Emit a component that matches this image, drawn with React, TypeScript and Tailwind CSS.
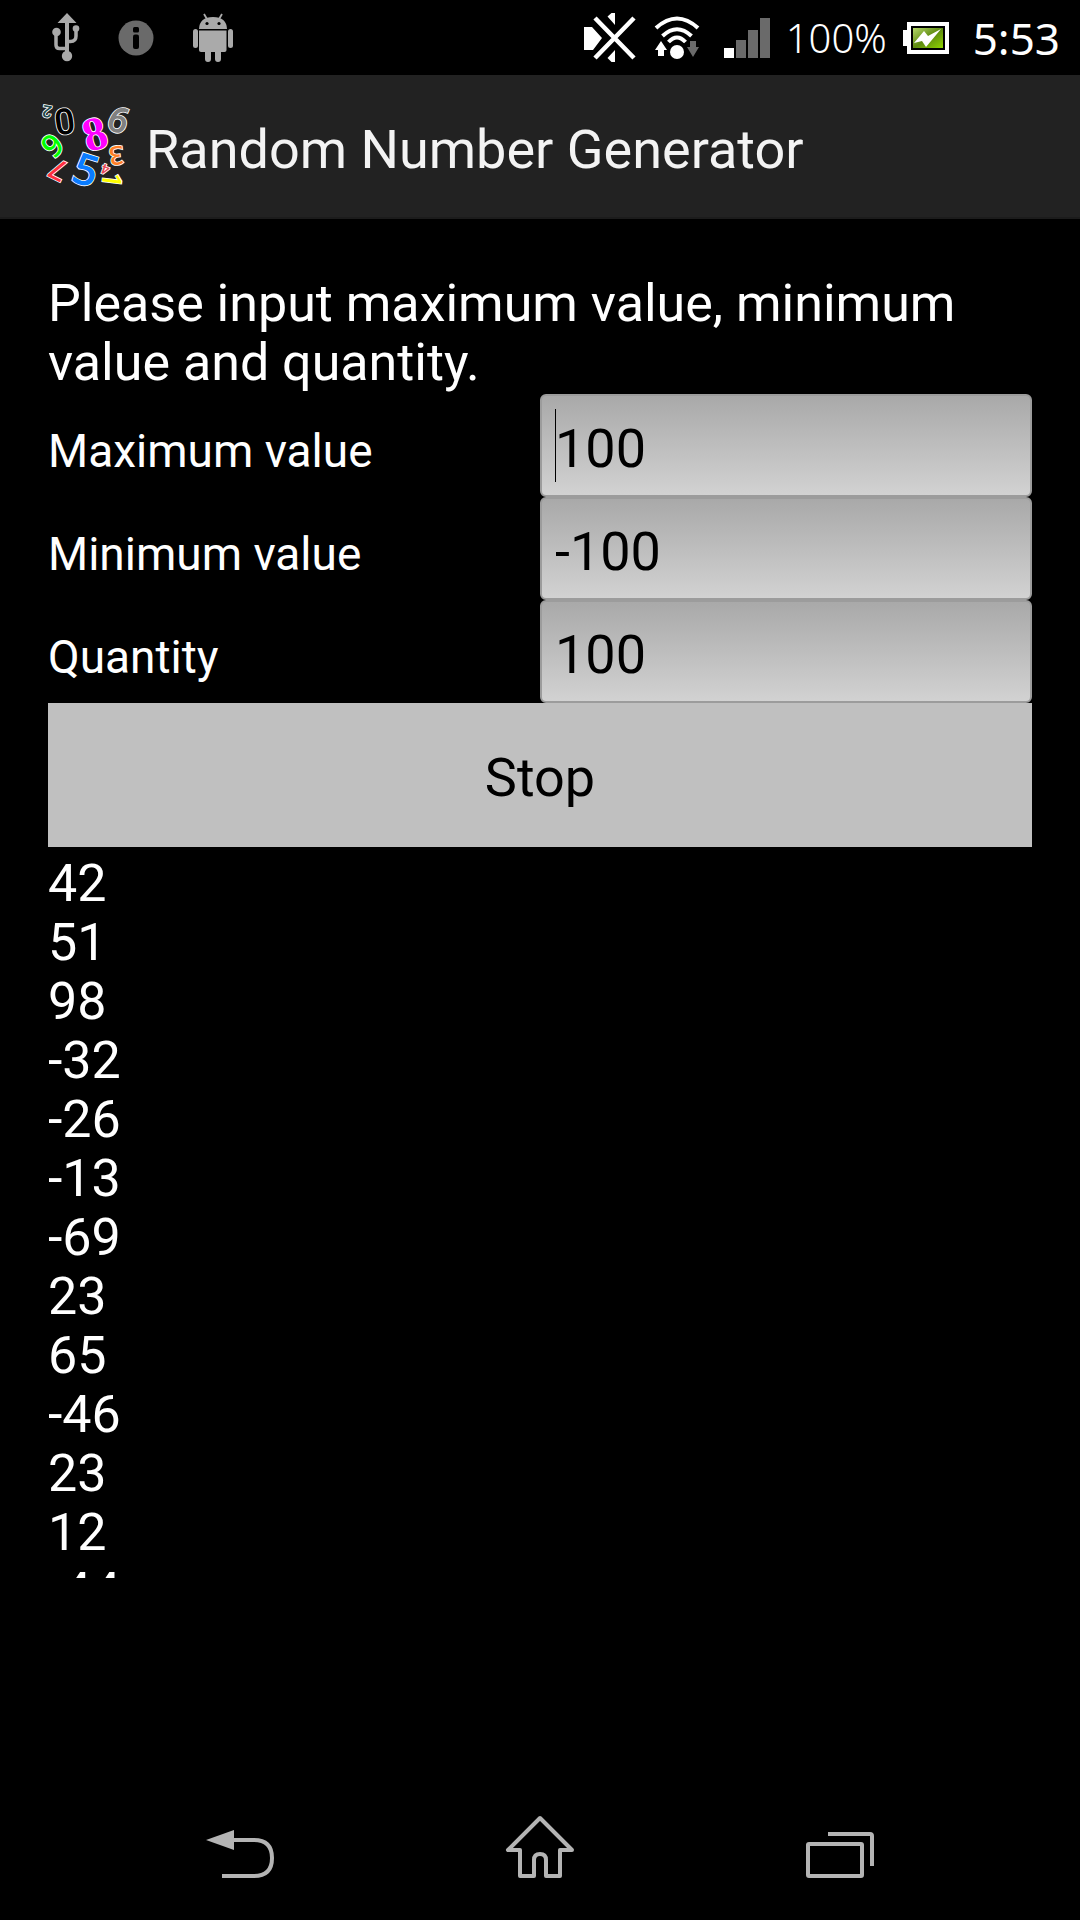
import React, { useState } from 'react';

const FIELDS = [
  { id: 'max', label: 'Maximum value', initial: '100' },
  { id: 'min', label: 'Minimum value', initial: '-100' },
  { id: 'quantity', label: 'Quantity', initial: '100' },
];

const RESULTS = [42, 51, 98, -32, -26, -13, -69, 23, 65, -46, 23, 12, -44];

const SANS = "font-['Open_Sans',sans-serif] font-semibold";
const NARROW = 'font-[Roboto,sans-serif] font-medium';
const SERIF = "font-['Liberation_Serif',serif] font-bold";

// scattered digits of the app logo
const LOGO_DIGITS = [
  { digit: '2', x: 82, y: 98, size: 50, angle: 190, color: '#1d4a50', font: NARROW },
  { digit: '0', x: 135, y: 127, size: 108, angle: -8, color: '#000000', font: NARROW },
  { digit: '8', x: 224, y: 161, size: 142, angle: -16, color: '#ff00ff', font: SERIF },
  { digit: '6', x: 298, y: 121, size: 110, angle: 24, color: '#808080', font: NARROW },
  { digit: '9', x: 98, y: 199, size: 94, angle: -42, color: '#00ff00', font: SANS },
  { digit: '3', x: 290, y: 230, size: 78, angle: 174, color: '#ff7f27', font: SANS },
  { digit: '7', x: 115, y: 273, size: 86, angle: 206, color: '#ff3040', font: NARROW },
  { digit: '5', x: 199, y: 272, size: 130, angle: 18, color: '#0a7cff', font: SANS },
  { digit: '4', x: 257, y: 271, size: 42, angle: 200, color: '#e84a5a', font: NARROW },
  { digit: '1', x: 277, y: 303, size: 80, angle: 97, color: '#ffff00', font: SANS },
];

function AppLogo() {
  return (
    <svg viewBox="49 57 288 288" className="size-24 shrink-0 overflow-visible" aria-hidden="true">
      {LOGO_DIGITS.map((d) => (
        <text
          key={d.digit}
          transform={`translate(${d.x} ${d.y}) rotate(${d.angle})`}
          y={d.size * 0.36}
          fontSize={d.size}
          textAnchor="middle"
          fill={d.color}
          stroke="#ffffff"
          strokeWidth={5}
          paintOrder="stroke"
          className={d.font}
        >
          {d.digit}
        </text>
      ))}
    </svg>
  );
}

function UsbIcon() {
  return (
    <svg viewBox="0 0 28 50" className="h-[50px] w-7" fill="#aaaaaa" aria-hidden="true">
      <path d="M15 0 24.500 10H17V40H13V10H5.500Z" />
      <path d="M4 19v13q0 3.500 3.500 3.500H15M24 15v8q0 5.500-5.500 5.500H15" fill="none" stroke="#aaaaaa" strokeWidth="3.500" />
      <circle cx="4.500" cy="19" r="4.300" />
      <circle cx="24" cy="15.500" r="3.300" />
      <circle cx="15" cy="43" r="5.200" />
    </svg>
  );
}

function InfoIcon() {
  return (
    <svg viewBox="0 0 36 36" className="size-9" aria-hidden="true">
      <circle cx="18" cy="18" r="17.500" fill="#6a6a6a" />
      <rect x="15" y="7" width="6" height="5.500" rx="1.500" fill="#000" />
      <rect x="15" y="14.500" width="6" height="14.500" rx="2" fill="#000" />
    </svg>
  );
}

function AndroidIcon() {
  return (
    <svg viewBox="0 0 42 50" className="h-[50px] w-[42px]" fill="#aaaaaa" aria-hidden="true">
      <path d="M12 1 15.500 7M30 1 26.500 7" stroke="#aaaaaa" strokeWidth="1.800" />
      <path d="M7 16Q7.500 4 21 4T35 16Z" />
      <circle cx="15" cy="10.500" r="1.600" fill="#000" />
      <circle cx="27" cy="10.500" r="1.600" fill="#000" />
      <path d="M7 17.500H34.500V37q0 2-2 2H9q-2 0-2-2Z" />
      <rect x="1" y="16" width="5" height="19" rx="2.500" />
      <rect x="36" y="16" width="5" height="19" rx="2.500" />
      <path d="M13 37h6v9q0 3-3 3t-3-3ZM23 37h6v9q0 3-3 3t-3-3Z" />
    </svg>
  );
}

function MuteIcon() {
  return (
    <svg viewBox="0 0 52 52" className="size-[52px]" fill="#ffffff" aria-hidden="true">
      <path d="M0 15h8l10 11-9 12H0ZM31 1v12l-7.500-8.500 4-3.500ZM31 50V38l-7.500 8 4 4Z" />
      <path d="M11 6 50 46M50 6 11 46" stroke="#ffffff" strokeWidth="4.500" />
    </svg>
  );
}

function WifiIcon() {
  return (
    <svg viewBox="0 0 46 44" className="h-11 w-[46px]" fill="none" aria-hidden="true">
      <path d="M2 12Q23-7 44 12M8.500 20Q23 6.500 37.500 20M14.500 26Q23 17 31.500 26" stroke="#ffffff" strokeWidth="4" />
      <circle cx="23" cy="36" r="7" fill="#ffffff" />
      <path d="M7 25 13 34H10v6H4v-6H1Z" fill="#ffffff" />
      <path d="M39 41 33 31h3v-6h6v6h3Z" fill="#6a6a6a" />
    </svg>
  );
}

function SignalIcon() {
  return (
    <svg viewBox="0 0 46 40" className="h-10 w-[46px]" fill="#6a6a6a" aria-hidden="true">
      <rect x="0" y="30" width="10" height="10" fill="#ffffff" />
      <rect x="12" y="22" width="10" height="18" />
      <rect x="24" y="12" width="10" height="28" />
      <rect x="36" y="0" width="10" height="40" />
    </svg>
  );
}

function BatteryIcon() {
  return (
    <svg viewBox="0 0 46 32" className="h-8 w-[46px]" aria-hidden="true">
      <defs>
        <linearGradient id="charge" x1="0" y1="0" x2="1" y2="1">
          <stop offset="0" stopColor="#b6d86a" />
          <stop offset="0.5" stopColor="#5e8a10" />
          <stop offset="1" stopColor="#8fd400" />
        </linearGradient>
      </defs>
      <path d="M4 0h42v32H4v-8H0V8h4Z" fill="#ffffff" />
      <rect x="8" y="4" width="34" height="24" fill="#000" />
      <rect x="10" y="6" width="30" height="20" fill="url(#charge)" />
      <path d="M11 21 21 9l4 5L38 7 23 25l-4-6Z" fill="#ffffff" />
    </svg>
  );
}

function StatusBar() {
  return (
    <header className="flex h-[75px] shrink-0 items-center justify-between pr-5 pl-[52px] text-white">
      <div className="flex items-center gap-[38px]">
        <UsbIcon />
        <InfoIcon />
        <AndroidIcon />
      </div>
      <div className="flex items-center">
        <MuteIcon />
        <span className="ml-[18px]">
          <WifiIcon />
        </span>
        <span className="ml-6">
          <SignalIcon />
        </span>
        <span className="ml-4 font-['Noto_Sans',sans-serif] text-[40px] leading-none font-light">100%</span>
        <span className="ml-4">
          <BatteryIcon />
        </span>
        <span className="ml-6 font-['Noto_Sans',sans-serif] text-[44px] leading-none">5:53</span>
      </div>
    </header>
  );
}

function NavBar() {
  return (
    <nav className="flex h-36 shrink-0 items-start justify-center gap-[180px] pt-1">
      <button type="button" aria-label="Back" className="size-[120px]">
        <svg viewBox="0 0 120 120" fill="none" stroke="#b4b4b4" strokeWidth="4">
          <path d="M50 60h24q18 0 18 18t-18 18H42" />
          <path d="M26 60 54 50V70Z" fill="#b4b4b4" stroke="none" />
        </svg>
      </button>
      <button type="button" aria-label="Home" className="size-[120px]">
        <svg viewBox="0 0 120 120" fill="none" stroke="#b4b4b4" strokeWidth="4" strokeLinejoin="round">
          <path d="M60 38 28 70H40V96H54V80q0-6 6-6t6 6V96H80V70H92Z" />
        </svg>
      </button>
      <button type="button" aria-label="Recent apps" className="size-[120px]">
        <svg viewBox="0 0 120 120" fill="none" stroke="#b4b4b4" strokeWidth="4">
          <rect x="28" y="64" width="54" height="32" rx="1" />
          <path d="M48 54H90q2 0 2 2V86" />
        </svg>
      </button>
    </nav>
  );
}

export default function App() {
  const [values, setValues] = useState<string[]>(FIELDS.map((f) => f.initial));

  const handleChange = (index: number, value: string) => {
    setValues(values.map((v, i) => (i === index ? value : v)));
  };

  return (
    <div className="flex h-screen flex-col bg-black font-[Roboto,sans-serif] text-white">
      <StatusBar />

      {/* ACTION BAR */}
      <div className="flex h-36 shrink-0 items-center gap-[14px] border-b-2 border-[#1c1c1c] bg-[#222222] pl-9">
        <AppLogo />
        <h1 className="pt-2 text-[54px] leading-none text-[#f3f3f3]">Random Number Generator</h1>
      </div>

      <main className="flex min-h-0 flex-1 flex-col px-12 pt-[55px] pb-[198px]">
        <p className="mb-[2px] text-[52px] leading-[59px]">
          Please input maximum value, minimum value and quantity.
        </p>

        {/* FIELDS */}
        <form>
          {FIELDS.map((field, index) => (
            <div key={field.id} className="grid grid-cols-2 items-baseline">
              <label htmlFor={field.id} className="text-[46px] leading-none">
                {field.label}
              </label>
              <div className="relative">
                <input
                  id={field.id}
                  type="text"
                  value={values[index]}
                  onChange={(e) => handleChange(index, e.target.value)}
                  className="block h-[103px] w-full rounded-md border-2 border-[#9c9c9c] bg-linear-to-b from-[#a9a9a9] to-[#d2d2d2] pt-[6px] pl-[13px] text-[54px] text-black outline-none"
                />
                {index === 0 && <span className="absolute top-[15px] left-[15px] h-[73px] w-px bg-black" />}
              </div>
            </div>
          ))}
          <button type="button" className="block h-36 w-full bg-[#c0c0c0] pt-1 text-[54px] text-black">
            Stop
          </button>
        </form>

        {/* RESULTS */}
        <ul className="min-h-0 flex-1 overflow-hidden pt-[7px] text-[52px] leading-[59px]">
          {RESULTS.map((n, i) => (
            <li key={i}>{n}</li>
          ))}
        </ul>
      </main>

      <NavBar />
    </div>
  );
}
